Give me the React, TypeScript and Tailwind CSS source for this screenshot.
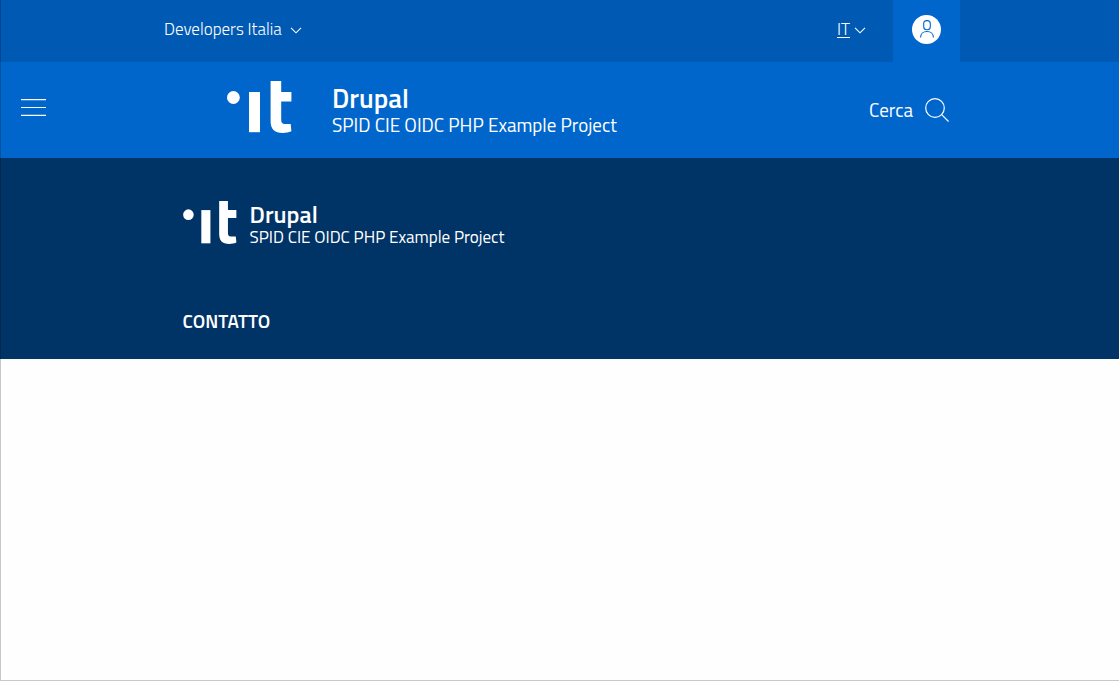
import React from 'react';

function ItLogo({ className }: { className: string }) {
  return (
    <svg viewBox="0 0 65 52" className={className} fill="currentColor" aria-hidden="true">
      <circle cx="6.4" cy="16.5" r="6.4" />
      <path d="M22 11h11v40.2H22z" />
      <path d="M43.6 0h10.6v11h10.2v9.500H54.2v18.2c0 3 1.2 4.200 3.600 4.200h5.900l.700 7.400c-2.700 1.200-5.400 1.700-8.600 1.700-8.600 0-12.200-4.200-12.200-12z" />
    </svg>
  );
}

function Chevron() {
  return (
    <svg viewBox="0 0 12 8" className="h-2 w-3" fill="none" stroke="currentColor" strokeWidth="1.1" aria-hidden="true">
      <path d="M1 1.800l5 5 5-5" />
    </svg>
  );
}

function SlimHeader() {
  return (
    <div className="border-l border-black/20 bg-[#0059b3]">
      <div className="mx-auto flex h-[62px] max-w-[800px] items-stretch justify-between pl-1">
        <button type="button" className="flex items-center gap-2 pb-0.5 text-[17px] font-light">
          Developers Italia
          <Chevron />
        </button>
        <div className="flex">
          <button type="button" aria-label="Lingua: italiano" className="mr-[27px] flex items-center gap-1 pb-0.5 text-[17px] font-light">
            <span className="underline underline-offset-2">IT</span>
            <Chevron />
          </button>
          <a href="#accedi" aria-label="Accedi" className="flex w-[67px] items-center justify-center bg-[#0066cc] pb-1">
            <span className="flex size-[29px] items-center justify-center rounded-full bg-white text-[#0066cc]">
              <svg viewBox="0 0 20 20" className="size-5" fill="none" stroke="currentColor" strokeWidth="1.1" aria-hidden="true">
                <rect x="6.700" y="1.600" width="6.600" height="9.200" rx="3" />
                <path d="M3.600 18.500c0-3.600 2.600-6 6.400-6s6.400 2.400 6.400 6" />
              </svg>
            </span>
          </a>
        </div>
      </div>
    </div>
  );
}

function MainHeader() {
  return (
    <header className="flex h-24 items-center border-l border-black/20 bg-[#0066cc] pl-5">
      <button type="button" aria-label="Apri il menu" className="mb-1.5 flex h-6 items-center">
        <svg viewBox="0 0 25 17" className="h-[17px] w-[25px]" stroke="currentColor" strokeWidth="1.200" aria-hidden="true">
          <path d="M0 .600h25M0 8.500h25M0 16.400h25" />
        </svg>
      </button>
      <a href="#home" className="ml-[181px] flex items-center gap-10 pb-1.5">
        <ItLogo className="h-[52px] w-[65px]" />
        <span className="flex flex-col pt-2">
          <span className="text-[27px] leading-7 font-semibold">Drupal</span>
          <span className="text-[19px] leading-[26px]">SPID CIE OIDC PHP Example Project</span>
        </span>
      </a>
      <button type="button" className="mr-[170px] ml-auto flex items-center gap-3 text-[19px]">
        Cerca
        <svg viewBox="0 0 24 24" className="size-6" fill="none" stroke="currentColor" strokeWidth="1.200" aria-hidden="true">
          <circle cx="10" cy="10" r="9.300" />
          <path d="M16.700 16.700l6.800 6.800" />
        </svg>
      </button>
    </header>
  );
}

function Footer() {
  return (
    <footer className="border-l border-black/20 bg-[#003366]">
      <div className="mx-auto max-w-[801px] px-[23px] pt-[39px] pb-[26px]">
        <a href="#home" className="flex items-center gap-[13px]">
          <ItLogo className="h-[43px] w-[54px]" />
          <span className="flex flex-col pt-[5px]">
            <span className="text-2xl leading-6 font-semibold">Drupal</span>
            <span className="text-[17px] leading-[22px]">SPID CIE OIDC PHP Example Project</span>
          </span>
        </a>
        <h4 className="pt-[61px] text-[19px] leading-6 font-semibold uppercase">Contatto</h4>
      </div>
    </footer>
  );
}

export default function App() {
  return (
    <div className="flex min-h-screen flex-col font-['Titillium_Web','Roboto',sans-serif] text-white">
      <SlimHeader />
      <MainHeader />
      <Footer />
      <main className="flex-1 border-b border-l border-[#c8c8c8] bg-[#fefefe]" />
    </div>
  );
}
